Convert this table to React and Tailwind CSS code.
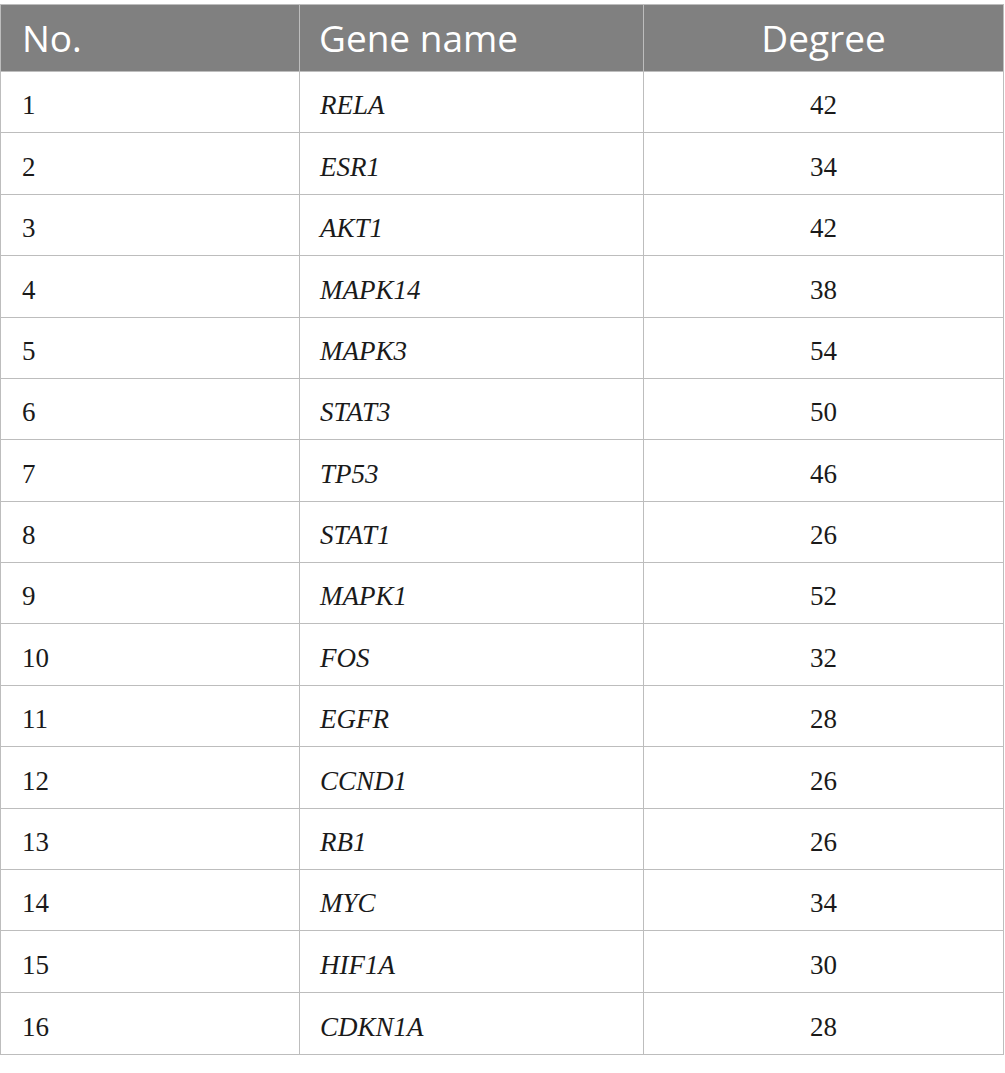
const rows = [
  [1, "RELA", 42],
  [2, "ESR1", 34],
  [3, "AKT1", 42],
  [4, "MAPK14", 38],
  [5, "MAPK3", 54],
  [6, "STAT3", 50],
  [7, "TP53", 46],
  [8, "STAT1", 26],
  [9, "MAPK1", 52],
  [10, "FOS", 32],
  [11, "EGFR", 28],
  [12, "CCND1", 26],
  [13, "RB1", 26],
  [14, "MYC", 34],
  [15, "HIF1A", 30],
  [16, "CDKN1A", 28],
];

export default function App() {
  return (
    <div className="w-[1005px] h-[1073px] bg-white pt-[4px]">
      <div className="w-[1004px] border border-[#bdbdbd]">
        <div
          className="flex h-[67px] bg-[#808080] text-white text-[37px] border-b border-[#bdbdbd]"
          style={{ fontFamily: '"Open Sans", "Noto Sans", sans-serif' }}
        >
          <div className="w-[298px] flex items-center pl-[21px]">No.</div>
          <div className="w-[344px] flex items-center pl-[19px] border-l border-[#bdbdbd]">Gene name</div>
          <div className="flex-1 flex items-center justify-center border-l border-[#bdbdbd]">Degree</div>
        </div>
        {rows.map(([n, g, d], i) => (
          <div
            key={n}
            className={
              "flex h-[61.375px] text-[27px] text-[#1a1a1a] " +
              (i < rows.length - 1 ? "border-b border-[#bdbdbd]" : "")
            }
            style={{ fontFamily: '"Liberation Serif", "Times New Roman", serif' }}
          >
            <div className="w-[298px] flex items-center pl-[21px] pt-[7px]">{n}</div>
            <div className="w-[344px] flex items-center pl-[20px] pt-[7px] border-l border-[#bdbdbd] italic">{g}</div>
            <div className="flex-1 flex items-center justify-center pt-[7px] border-l border-[#bdbdbd]">{d}</div>
          </div>
        ))}
      </div>
    </div>
  );
}
